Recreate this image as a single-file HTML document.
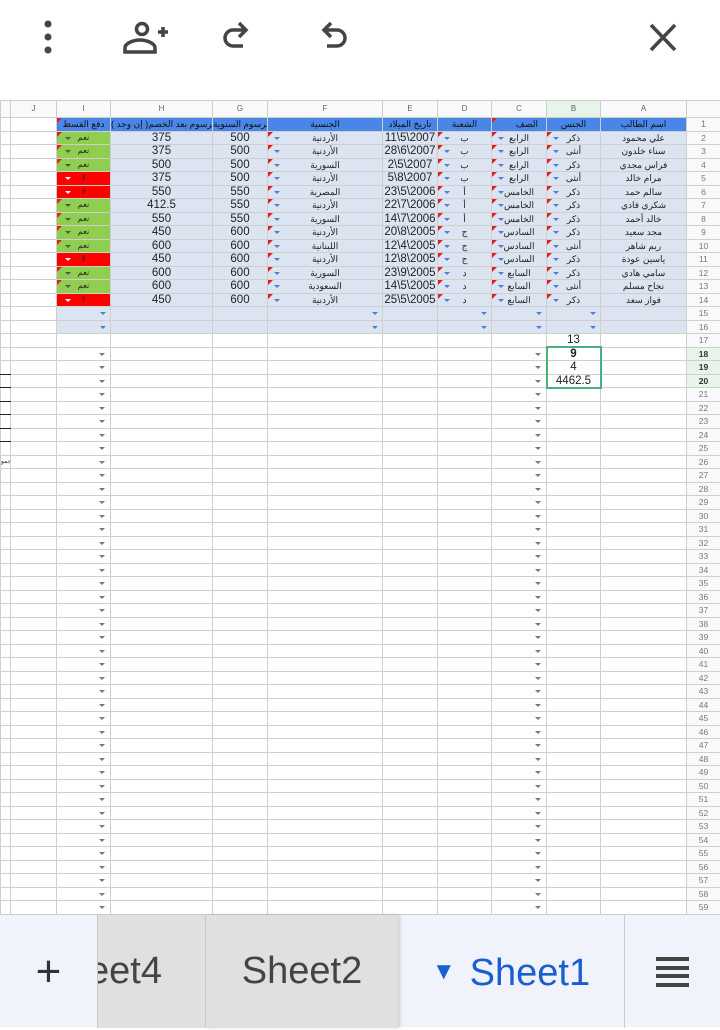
<!DOCTYPE html>
<html><head><meta charset="utf-8"><style>
*{margin:0;padding:0;box-sizing:border-box}
body{width:720px;height:1027px;overflow:hidden;background:#fff;font-family:"Liberation Sans","Noto Sans CJK SC",sans-serif;position:relative}
.top{position:absolute;left:0;top:0;width:720px;height:100px;background:#fff}
table{position:absolute;left:0;top:100px;border-collapse:collapse;table-layout:fixed;width:720px}
td{border:1px solid #cfcfcf;height:13.5px;padding:0;font-size:11.5px;color:#222;text-align:center;position:relative;overflow:hidden;white-space:nowrap;line-height:12px}
tr.h td{height:17px;background:#f8f9fa;color:#666;font-size:8px;border-color:#ccc}
td.n{background:#f8f9fa;color:#777;font-size:8.5px;text-align:center}
td.ns{background:#e6f4ea;color:#333;font-weight:bold}
tr.hd td{background:#4a86e8;color:#111;font-size:9px}
tr.hd td.n{background:#f8f9fa;color:#777}
tr.d td{background:#dbe4f0}
tr.d td.n,tr.d td.e{background:#f8f9fa}
tr.d td.e{background:#fff}
.ar{font-size:9px}
td.gr{background:#8fce4f !important;font-size:8px}
td.rd{background:#ff0000 !important;font-size:8px}
.rf::before{content:"";position:absolute;left:0;top:0;border-top:5px solid #e02020;border-right:5px solid transparent}
.bl::after{content:"";position:absolute;left:6px;top:5px;border-top:3px solid #4a7fd8;border-left:3.5px solid transparent;border-right:3.5px solid transparent}
.gl::after{content:"";position:absolute;left:8px;top:5px;border-top:3px solid #555;border-left:3.5px solid transparent;border-right:3.5px solid transparent}
.wl::after{content:"";position:absolute;left:8px;top:5px;border-top:3px solid #fff;border-left:3.5px solid transparent;border-right:3.5px solid transparent}
.br::after{content:"";position:absolute;right:4px;top:5px;border-top:3px solid #4a7fd8;border-left:3.5px solid transparent;border-right:3.5px solid transparent}
.g::after{content:"";position:absolute;right:5px;top:5px;border-top:3px solid #777;border-left:3px solid transparent;border-right:3px solid transparent}
.sel{border-left:2px solid #4caf80 !important;border-right:2px solid #4caf80 !important}
.st{border-top:2px solid #4caf80 !important}.sb{border-bottom:2px solid #4caf80 !important}
.tabs{position:absolute;left:0;top:914px;width:720px;height:113px;background:#f0f3fb;border-top:1px solid #ccc}
.tab{position:absolute;top:0;height:113px;font-size:38px;color:#444;line-height:113px;text-align:center}
</style></head><body>
<div class="top">
<svg width="720" height="100" style="position:absolute;left:0;top:0">
<g fill="#444"><circle cx="48" cy="24" r="3.5"/><circle cx="48" cy="37" r="3.5"/><circle cx="48" cy="50" r="3.5"/></g>
<g fill="none" stroke="#444" stroke-width="3.5">
<circle cx="142" cy="29" r="5.5"/><path d="M125 52v-4c0-5 9-8 15-8s15 3 15 8v4z"/><path d="M158 32h10M163 27v10"/>
<path d="M245 30h-12a8 8 0 0 0 0 16h10M239 23l7 7-7 7"/>
<path d="M325 30h12a8 8 0 0 1 0 16h-10M331 23l-7 7 7 7"/>
<path d="M651 25l24 25M675 25l-24 25"/></g></svg>
</div>
<table>
<colgroup><col style="width:10px"><col style="width:46px"><col style="width:54px"><col style="width:102px"><col style="width:55px"><col style="width:115px"><col style="width:55px"><col style="width:54px"><col style="width:55px"><col style="width:54px"><col style="width:86px"><col style="width:34px"></colgroup>
<tr class="h"><td></td><td>J</td><td>I</td><td>H</td><td>G</td><td>F</td><td>E</td><td>D</td><td>C</td><td style="background:#e6f4ea">B</td><td>A</td><td></td></tr>
<tr class="hd"><td class="e" style="background:#fff"></td><td class="e" style="background:#fff"></td><td class="rf gl">دفع القسط</td><td>الرسوم بعد الخصم( إن وجد )</td><td>الرسوم السنوية</td><td>الجنسية</td><td>تاريخ الميلاد</td><td>الشعبة</td><td class="rf" style="text-align:right;padding-right:8px">الصف</td><td>الجنس</td><td>اسم الطالب</td><td class="n">1</td></tr>
<tr class="d"><td class="e"></td><td class="e"></td><td class="gr rf gl">نعم</td><td>375</td><td>500</td><td class="rf bl ar">الأردنية</td><td>11\5\2007</td><td class="rf bl ar">ب</td><td class="rf bl ar">الرابع</td><td class="rf bl ar">ذكر</td><td class="ar">علي محمود</td><td class="n">2</td></tr>
<tr class="d"><td class="e"></td><td class="e"></td><td class="gr rf gl">نعم</td><td>375</td><td>500</td><td class="rf bl ar">الأردنية</td><td>28\6\2007</td><td class="rf bl ar">ب</td><td class="rf bl ar">الرابع</td><td class="rf bl ar">أنثى</td><td class="ar">سناء خلدون</td><td class="n">3</td></tr>
<tr class="d"><td class="e"></td><td class="e"></td><td class="gr rf gl">نعم</td><td>500</td><td>500</td><td class="rf bl ar">السورية</td><td>2\5\2007</td><td class="rf bl ar">ب</td><td class="rf bl ar">الرابع</td><td class="rf bl ar">ذكر</td><td class="ar">فراس مجدي</td><td class="n">4</td></tr>
<tr class="d"><td class="e"></td><td class="e"></td><td class="rd wl">لا</td><td>375</td><td>500</td><td class="rf bl ar">الأردنية</td><td>5\8\2007</td><td class="rf bl ar">ب</td><td class="rf bl ar">الرابع</td><td class="rf bl ar">أنثى</td><td class="ar">مرام خالد</td><td class="n">5</td></tr>
<tr class="d"><td class="e"></td><td class="e"></td><td class="rd wl">لا</td><td>550</td><td>550</td><td class="rf bl ar">المصرية</td><td>23\5\2006</td><td class="rf bl ar">أ</td><td class="rf bl ar">الخامس</td><td class="rf bl ar">ذكر</td><td class="ar">سالم حمد</td><td class="n">6</td></tr>
<tr class="d"><td class="e"></td><td class="e"></td><td class="gr rf gl">نعم</td><td>412.5</td><td>550</td><td class="rf bl ar">الأردنية</td><td>22\7\2006</td><td class="rf bl ar">أ</td><td class="rf bl ar">الخامس</td><td class="rf bl ar">ذكر</td><td class="ar">شكري فادي</td><td class="n">7</td></tr>
<tr class="d"><td class="e"></td><td class="e"></td><td class="gr rf gl">نعم</td><td>550</td><td>550</td><td class="rf bl ar">السورية</td><td>14\7\2006</td><td class="rf bl ar">أ</td><td class="rf bl ar">الخامس</td><td class="rf bl ar">ذكر</td><td class="ar">خالد أحمد</td><td class="n">8</td></tr>
<tr class="d"><td class="e"></td><td class="e"></td><td class="gr rf gl">نعم</td><td>450</td><td>600</td><td class="rf bl ar">الأردنية</td><td>20\8\2005</td><td class="rf bl ar">ج</td><td class="rf bl ar">السادس</td><td class="rf bl ar">ذكر</td><td class="ar">مجد سعيد</td><td class="n">9</td></tr>
<tr class="d"><td class="e"></td><td class="e"></td><td class="gr rf gl">نعم</td><td>600</td><td>600</td><td class="rf bl ar">اللبنانية</td><td>12\4\2005</td><td class="rf bl ar">ج</td><td class="rf bl ar">السادس</td><td class="rf bl ar">أنثى</td><td class="ar">ريم شاهر</td><td class="n">10</td></tr>
<tr class="d"><td class="e"></td><td class="e"></td><td class="rd wl">لا</td><td>450</td><td>600</td><td class="rf bl ar">الأردنية</td><td>12\8\2005</td><td class="rf bl ar">ج</td><td class="rf bl ar">السادس</td><td class="rf bl ar">ذكر</td><td class="ar">ياسين عودة</td><td class="n">11</td></tr>
<tr class="d"><td class="e"></td><td class="e"></td><td class="gr rf gl">نعم</td><td>600</td><td>600</td><td class="rf bl ar">السورية</td><td>23\9\2005</td><td class="rf bl ar">د</td><td class="rf bl ar">السابع</td><td class="rf bl ar">ذكر</td><td class="ar">سامي هادي</td><td class="n">12</td></tr>
<tr class="d"><td class="e"></td><td class="e"></td><td class="gr rf gl">نعم</td><td>600</td><td>600</td><td class="rf bl ar">السعودية</td><td>14\5\2005</td><td class="rf bl ar">د</td><td class="rf bl ar">السابع</td><td class="rf bl ar">أنثى</td><td class="ar">نجاح مسلم</td><td class="n">13</td></tr>
<tr class="d"><td class="e"></td><td class="e"></td><td class="rd wl">لا</td><td>450</td><td>600</td><td class="rf bl ar">الأردنية</td><td>25\5\2005</td><td class="rf bl ar">د</td><td class="rf bl ar">السابع</td><td class="rf bl ar">ذكر</td><td class="ar">فواز سعد</td><td class="n">14</td></tr>
<tr class="d"><td class="e"></td><td class="e"></td><td class="br"></td><td></td><td></td><td class="br"></td><td></td><td class="br"></td><td class="br"></td><td class="br"></td><td></td><td class="n">15</td></tr>
<tr class="d"><td class="e"></td><td class="e"></td><td class="br"></td><td></td><td></td><td class="br"></td><td></td><td class="br"></td><td class="br"></td><td class="br"></td><td></td><td class="n">16</td></tr>
<tr><td></td><td></td><td></td><td></td><td></td><td></td><td></td><td></td><td></td><td>13</td><td></td><td class="n">17</td></tr>
<tr><td></td><td></td><td class="g"></td><td></td><td></td><td></td><td></td><td></td><td class="g"></td><td class="sel st" style="font-weight:bold">9</td><td></td><td class="n ns">18</td></tr>
<tr><td style="border-bottom:1px solid #222"></td><td></td><td class="g"></td><td></td><td></td><td></td><td></td><td></td><td class="g"></td><td class="sel">4</td><td></td><td class="n ns">19</td></tr>
<tr><td style="border-bottom:1px solid #222"></td><td></td><td class="g"></td><td></td><td></td><td></td><td></td><td></td><td class="g"></td><td class="sel sb">4462.5</td><td></td><td class="n ns">20</td></tr>
<tr><td style="border-bottom:1px solid #222"></td><td></td><td class="g"></td><td></td><td></td><td></td><td></td><td></td><td class="g"></td><td></td><td></td><td class="n">21</td></tr>
<tr><td style="border-bottom:1px solid #222"></td><td></td><td class="g"></td><td></td><td></td><td></td><td></td><td></td><td class="g"></td><td></td><td></td><td class="n">22</td></tr>
<tr><td style="border-bottom:1px solid #222"></td><td></td><td class="g"></td><td></td><td></td><td></td><td></td><td></td><td class="g"></td><td></td><td></td><td class="n">23</td></tr>
<tr><td style="border-bottom:1px solid #222"></td><td></td><td class="g"></td><td></td><td></td><td></td><td></td><td></td><td class="g"></td><td></td><td></td><td class="n">24</td></tr>
<tr><td></td><td></td><td class="g"></td><td></td><td></td><td></td><td></td><td></td><td class="g"></td><td></td><td></td><td class="n">25</td></tr>
<tr><td style="font-size:6px;text-align:left">مجمو</td><td></td><td class="g"></td><td></td><td></td><td></td><td></td><td></td><td class="g"></td><td></td><td></td><td class="n">26</td></tr>
<tr><td></td><td></td><td class="g"></td><td></td><td></td><td></td><td></td><td></td><td class="g"></td><td></td><td></td><td class="n">27</td></tr>
<tr><td></td><td></td><td class="g"></td><td></td><td></td><td></td><td></td><td></td><td class="g"></td><td></td><td></td><td class="n">28</td></tr>
<tr><td></td><td></td><td class="g"></td><td></td><td></td><td></td><td></td><td></td><td class="g"></td><td></td><td></td><td class="n">29</td></tr>
<tr><td></td><td></td><td class="g"></td><td></td><td></td><td></td><td></td><td></td><td class="g"></td><td></td><td></td><td class="n">30</td></tr>
<tr><td></td><td></td><td class="g"></td><td></td><td></td><td></td><td></td><td></td><td class="g"></td><td></td><td></td><td class="n">31</td></tr>
<tr><td></td><td></td><td class="g"></td><td></td><td></td><td></td><td></td><td></td><td class="g"></td><td></td><td></td><td class="n">32</td></tr>
<tr><td></td><td></td><td class="g"></td><td></td><td></td><td></td><td></td><td></td><td class="g"></td><td></td><td></td><td class="n">33</td></tr>
<tr><td></td><td></td><td class="g"></td><td></td><td></td><td></td><td></td><td></td><td class="g"></td><td></td><td></td><td class="n">34</td></tr>
<tr><td></td><td></td><td class="g"></td><td></td><td></td><td></td><td></td><td></td><td class="g"></td><td></td><td></td><td class="n">35</td></tr>
<tr><td></td><td></td><td class="g"></td><td></td><td></td><td></td><td></td><td></td><td class="g"></td><td></td><td></td><td class="n">36</td></tr>
<tr><td></td><td></td><td class="g"></td><td></td><td></td><td></td><td></td><td></td><td class="g"></td><td></td><td></td><td class="n">37</td></tr>
<tr><td></td><td></td><td class="g"></td><td></td><td></td><td></td><td></td><td></td><td class="g"></td><td></td><td></td><td class="n">38</td></tr>
<tr><td></td><td></td><td class="g"></td><td></td><td></td><td></td><td></td><td></td><td class="g"></td><td></td><td></td><td class="n">39</td></tr>
<tr><td></td><td></td><td class="g"></td><td></td><td></td><td></td><td></td><td></td><td class="g"></td><td></td><td></td><td class="n">40</td></tr>
<tr><td></td><td></td><td class="g"></td><td></td><td></td><td></td><td></td><td></td><td class="g"></td><td></td><td></td><td class="n">41</td></tr>
<tr><td></td><td></td><td class="g"></td><td></td><td></td><td></td><td></td><td></td><td class="g"></td><td></td><td></td><td class="n">42</td></tr>
<tr><td></td><td></td><td class="g"></td><td></td><td></td><td></td><td></td><td></td><td class="g"></td><td></td><td></td><td class="n">43</td></tr>
<tr><td></td><td></td><td class="g"></td><td></td><td></td><td></td><td></td><td></td><td class="g"></td><td></td><td></td><td class="n">44</td></tr>
<tr><td></td><td></td><td class="g"></td><td></td><td></td><td></td><td></td><td></td><td class="g"></td><td></td><td></td><td class="n">45</td></tr>
<tr><td></td><td></td><td class="g"></td><td></td><td></td><td></td><td></td><td></td><td class="g"></td><td></td><td></td><td class="n">46</td></tr>
<tr><td></td><td></td><td class="g"></td><td></td><td></td><td></td><td></td><td></td><td class="g"></td><td></td><td></td><td class="n">47</td></tr>
<tr><td></td><td></td><td class="g"></td><td></td><td></td><td></td><td></td><td></td><td class="g"></td><td></td><td></td><td class="n">48</td></tr>
<tr><td></td><td></td><td class="g"></td><td></td><td></td><td></td><td></td><td></td><td class="g"></td><td></td><td></td><td class="n">49</td></tr>
<tr><td></td><td></td><td class="g"></td><td></td><td></td><td></td><td></td><td></td><td class="g"></td><td></td><td></td><td class="n">50</td></tr>
<tr><td></td><td></td><td class="g"></td><td></td><td></td><td></td><td></td><td></td><td class="g"></td><td></td><td></td><td class="n">51</td></tr>
<tr><td></td><td></td><td class="g"></td><td></td><td></td><td></td><td></td><td></td><td class="g"></td><td></td><td></td><td class="n">52</td></tr>
<tr><td></td><td></td><td class="g"></td><td></td><td></td><td></td><td></td><td></td><td class="g"></td><td></td><td></td><td class="n">53</td></tr>
<tr><td></td><td></td><td class="g"></td><td></td><td></td><td></td><td></td><td></td><td class="g"></td><td></td><td></td><td class="n">54</td></tr>
<tr><td></td><td></td><td class="g"></td><td></td><td></td><td></td><td></td><td></td><td class="g"></td><td></td><td></td><td class="n">55</td></tr>
<tr><td></td><td></td><td class="g"></td><td></td><td></td><td></td><td></td><td></td><td class="g"></td><td></td><td></td><td class="n">56</td></tr>
<tr><td></td><td></td><td class="g"></td><td></td><td></td><td></td><td></td><td></td><td class="g"></td><td></td><td></td><td class="n">57</td></tr>
<tr><td></td><td></td><td class="g"></td><td></td><td></td><td></td><td></td><td></td><td class="g"></td><td></td><td></td><td class="n">58</td></tr>
<tr><td></td><td></td><td class="g"></td><td></td><td></td><td></td><td></td><td></td><td class="g"></td><td></td><td></td><td class="n">59</td></tr>
<tr><td></td><td></td><td></td><td></td><td></td><td></td><td></td><td></td><td></td><td></td><td></td><td class="n">60</td></tr>
</table>
<div class="tabs">
<div class="tab" style="left:0;width:97px;font-size:44px;color:#333;font-weight:300">+</div>
<div class="tab" style="left:97px;width:108px;background:#e0e1df;border-left:1px solid #c8c8c8;overflow:hidden;text-align:left"><span style="margin-left:-10px">eet4</span></div>
<div class="tab" style="left:205px;width:193px;background:#e0e1df;border-left:1px solid #c8c8c8;box-shadow:2px 0 3px rgba(0,0,0,.15)">Sheet2</div>
<div class="tab" style="left:399px;width:224px;color:#1a5fd0"><span style="font-size:24px;vertical-align:6px;margin-right:14px">&#9660;</span>Sheet1</div>
<div class="tab" style="left:624px;width:96px;border-left:1px solid #ccc">
<svg width="34" height="30" style="position:absolute;left:31px;top:42px"><g fill="#444"><rect x="0" y="0" width="33" height="4"/><rect x="0" y="9" width="33" height="4"/><rect x="0" y="17" width="33" height="4"/><rect x="0" y="26" width="33" height="4"/></g></svg>
</div>
</div>
</body></html>
